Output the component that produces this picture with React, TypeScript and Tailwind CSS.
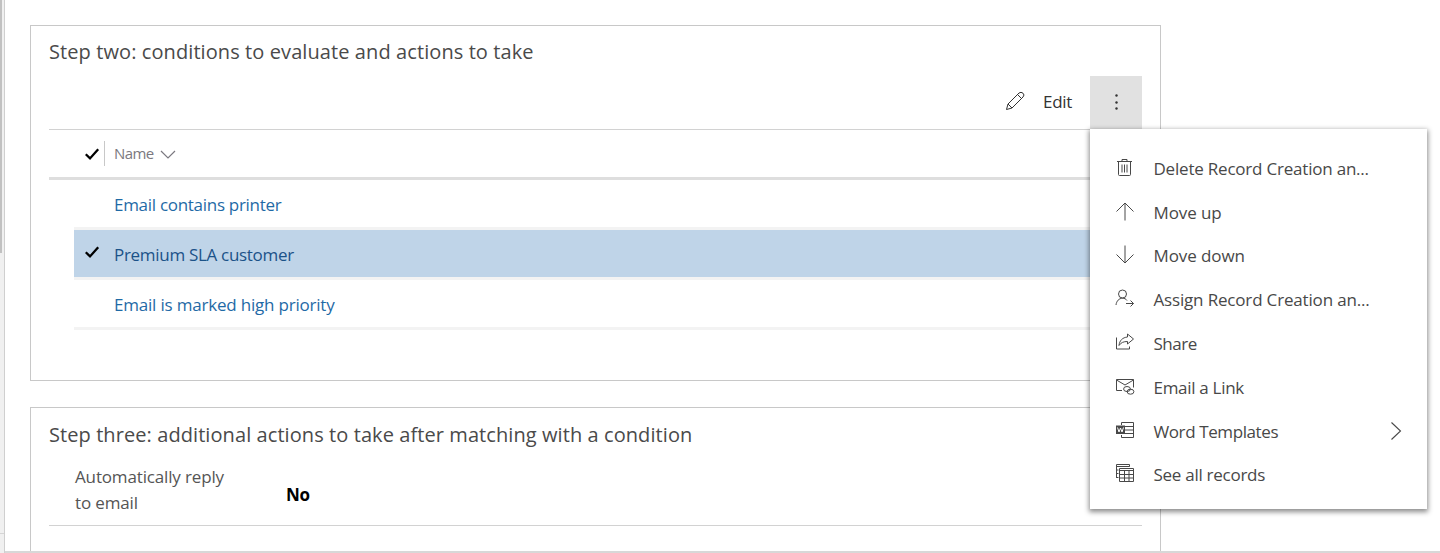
import type { ReactNode } from 'react';

function Glyph({ children, size = 20, className = '' }: { children: ReactNode; size?: number; className?: string }) {
  return (
    <svg
      width={size}
      height={size}
      viewBox={`0 0 ${size} ${size}`}
      fill="none"
      stroke="currentColor"
      strokeWidth="1"
      className={`block shrink-0 ${className}`}
    >
      {children}
    </svg>
  );
}

function Check({ className = '' }: { className?: string }) {
  return (
    <svg width="16" height="14" viewBox="0 0 16 14" fill="none" stroke="#000" strokeWidth="2.3" className={`block ${className}`}>
      <path d="M1.8 7.3 6 11.4 14.2 2.2" />
    </svg>
  );
}

const icons = {
  trash: (
    <Glyph>
      <path d="M2 4.500h15M7 4.500V2.500h5v2M3.500 4.500v13q0 1 1 1h10q1 0 1-1v-13M7 7.500v8M9.500 7.500v8M12 7.500v8" />
    </Glyph>
  ),
  up: (
    <Glyph>
      <path d="M10 19.500V2M1.500 10.500 10 2l8.500 8.500" />
    </Glyph>
  ),
  down: (
    <Glyph>
      <path d="M10 1.500V19M1.500 10.500 10 19l8.500-8.500" />
    </Glyph>
  ),
  assign: (
    <Glyph>
      <circle cx="7.500" cy="6" r="4" />
      <path d="M1 17C1.500 13 4 10.300 7.500 10.200c2 0 3.500.8 4.500 2.300M11 15.500h7.500M15.500 12.500l3 3-3 3" />
    </Glyph>
  ),
  share: (
    <Glyph>
      <path d="M1.500 5.500v11.500h13v-2.500M12.500 2l6 5-6 5V9.500C8.500 9.500 6 10.500 4 13.500 4.500 8.500 7.500 5.500 12.500 5z" />
    </Glyph>
  ),
  mail: (
    <Glyph>
      <path d="M7 14.500H1.500V3.500h17v8M1.500 4l8.500 5 8.500-5" />
      <ellipse cx="12" cy="13" rx="3.400" ry="2.500" />
      <ellipse cx="15.500" cy="15.700" rx="3.400" ry="2.500" />
    </Glyph>
  ),
  word: (
    <Glyph>
      <path d="M6.500 5V2.500H18.500V17.500H6.500V15M10 6.500h8.500M10 10h8.500M10 13.500h8.500" />
      <rect x="1" y="5.500" width="9" height="8.500" fill="currentColor" stroke="none" />
      <path d="M2.500 7.500 4 12l1.500-4L7 12l1.500-4.500" stroke="#fff" />
    </Glyph>
  ),
  records: (
    <Glyph>
      <path d="M1.500 15V1.500h13v2.200M1.500 3.500h13M1 7h2.500M1 10.500h2.500M1 14.500h2.500M4.500 5.500h14v13h-14zM4.500 7.500h14M4.500 11.500h14M4.500 15h14M9.500 7.700v10.800M14 7.700v10.800" />
    </Glyph>
  ),
};

const menu = [
  { icon: icons.trash, label: 'Delete Record Creation an...', track: 'tracking-[-0.21px]' },
  { icon: icons.up, label: 'Move up', track: 'tracking-[-0.1px]' },
  { icon: icons.down, label: 'Move down', track: 'tracking-[-0.1px]' },
  { icon: icons.assign, label: 'Assign Record Creation an...', track: 'tracking-[-0.17px]' },
  { icon: icons.share, label: 'Share', track: 'tracking-[-0.5px]' },
  { icon: icons.mail, label: 'Email a Link', track: 'tracking-[-0.3px]' },
  { icon: icons.word, label: 'Word Templates', track: 'tracking-[-0.4px]', sub: true },
  { icon: icons.records, label: 'See all records', track: 'tracking-[-0.27px]' },
];

const rows = [
  { name: 'Email contains printer', track: 'tracking-[-0.29px]' },
  { name: 'Premium SLA customer', track: 'tracking-[-0.3px]', selected: true },
  { name: 'Email is marked high priority', track: 'tracking-[-0.2px]' },
];

function OverflowMenu() {
  return (
    <div className="absolute right-[-285px] top-[53px] z-10 h-[380px] w-[337px] bg-white pt-[17.5px] shadow-[0_2px_5px_1px_rgba(0,0,0,0.45)]">
      {menu.map((m) => (
        <div key={m.label} className="flex h-[43.8px] items-center pl-[25px] pr-[25px] text-[#484848]">
          <span className="mb-[3px] mr-[18.500px]">{m.icon}</span>
          <span className={`grow whitespace-nowrap pt-px text-[17px] leading-6 ${m.track}`}>{m.label}</span>
          {m.sub && (
            <svg width="12" height="20" viewBox="0 0 12 20" fill="none" stroke="currentColor" strokeWidth="1.1">
              <path d="M1.500 1.500 10.500 10l-9 8.500" />
            </svg>
          )}
        </div>
      ))}
    </div>
  );
}

export default function App() {
  return (
    <div className="flex h-[553px] w-full overflow-hidden bg-white font-['Open_Sans','Noto_Sans',sans-serif]">
      <div className="flex w-[5px] shrink-0 flex-col border-r border-[#cfcfcf] bg-[#f0f0f0]">
        <div className="h-[253px] w-[2px] bg-[#c1c1c1]" />
        <div className="mt-[280px] h-px bg-[#d5d5d5]" />
      </div>
      <main className="flex min-w-0 grow flex-col border-b-2 border-[#d8d8d8] pl-[25px] pt-[25px]">
        <section className="h-[356px] w-[1131px] shrink-0 border border-[#c8c8c8] px-[18px]">
          <h2 className="flex h-[50px] items-center whitespace-nowrap pt-px text-[20px] tracking-[0.09px] text-[#4a4a4a]">
            Step two: conditions to evaluate and actions to take
          </h2>
          <div className="flex h-[53px] items-start justify-end">
            <button className="flex h-[52px] items-center pr-[18px] text-[17px] text-[#333]">
              <Glyph className="mb-[2px] mr-[18px]">
                <path d="M1.500 18.500 3 13 14 2q2-1.500 4 .2t0 3.800L7 17zM3 13l4 4M12.500 3.500l4 4" />
              </Glyph>
              <span className="mb-px tracking-[-0.3px]">Edit</span>
            </button>
            <div className="relative h-[53px] w-[52px] bg-[#e1e1e1]">
              <svg width="52" height="52" viewBox="0 0 52 52" fill="#333">
                <circle cx="26.500" cy="19.500" r="1.200" />
                <circle cx="26.500" cy="26.500" r="1.200" />
                <circle cx="26.500" cy="32.500" r="1.200" />
              </svg>
              <OverflowMenu />
            </div>
          </div>
          <div className="flex h-[51px] items-center border-b-[3px] border-t border-[#dedede] border-t-[#d2d2d2] pl-[35px]">
            <Check />
            <div className="ml-1 flex h-[25px] items-center border-l border-[#c8c8c8] pl-[9px] text-[15px] text-[#7b7980]">
              <span className="tracking-[-0.6px]">Name</span>
              <svg width="16" height="10" viewBox="0 0 16 10" fill="none" stroke="currentColor" strokeWidth="1.200" className="ml-[6px] mt-[3px]">
                <path d="m1 1 7 7 7-7" />
              </svg>
            </div>
          </div>
          <div className="ml-[25px]">
            {rows.map((r) => (
              <div
                key={r.name}
                className={`flex h-[50px] items-center border-b-[3px] border-[#f3f3f3] text-[17px] ${r.selected ? 'bg-[#bfd4e8] text-[#1b5288]' : 'text-[#1f6aa6]'}`}
              >
                <div className="w-[40px] pl-[10px]">{r.selected && <Check className="mb-[3px]" />}</div>
                <span className={`whitespace-nowrap pt-[2px] ${r.track}`}>{r.name}</span>
              </div>
            ))}
          </div>
        </section>
        <section className="mt-[26px] w-[1131px] grow border border-b-0 border-[#c8c8c8] px-[18px]">
          <h2 className="flex h-[53px] items-center whitespace-nowrap text-[20px] tracking-[0.08px] text-[#4a4a4a]">
            Step three: additional actions to take after matching with a condition
          </h2>
          <div className="flex h-[65px] items-center border-b border-[#d2d2d2] pl-[26px]">
            <div className="mb-[6px] w-[211px] text-[17px] leading-[26px] tracking-[-0.15px] text-[#555]">
              Automatically reply
              <br />
              to email
            </div>
            <span className="pt-[3px] text-[17px] font-bold tracking-[-0.3px] text-black">No</span>
          </div>
        </section>
      </main>
    </div>
  );
}
